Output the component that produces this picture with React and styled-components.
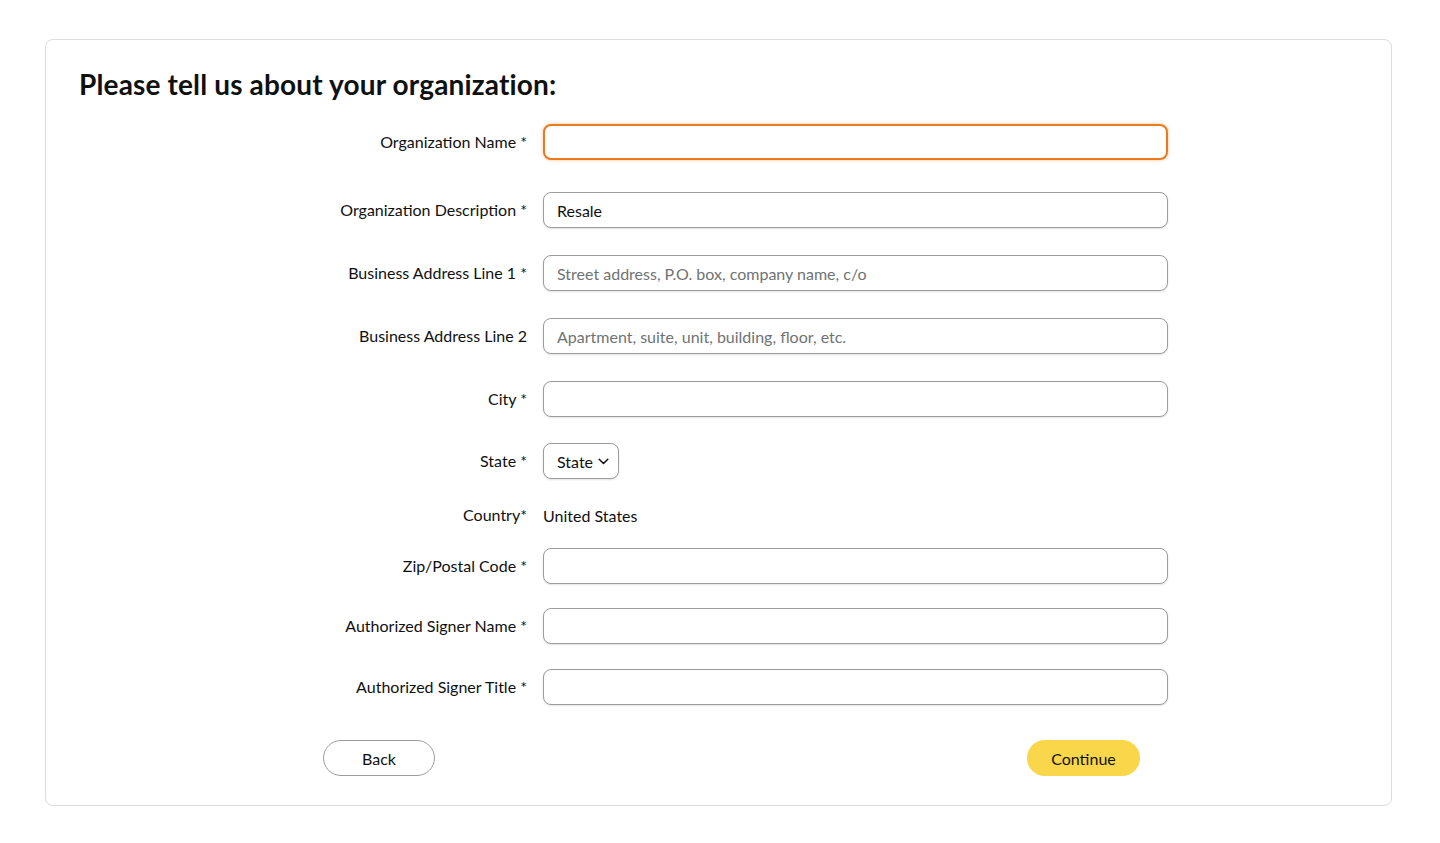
import React from "react";
import styled, { createGlobalStyle } from "styled-components";

const Global = createGlobalStyle`
  html, body { margin: 0; padding: 0; background: #ffffff; }
  body { font-family: Lato, "Open Sans", Arial, sans-serif; color: #0f1111; }
  * { box-sizing: border-box; }
`;

const Page = styled.div`
  padding: 39px 48px 38px 45px;
`;

const Card = styled.section`
  border: 1px solid #dddddd;
  border-radius: 8px;
  padding: 28px 33px 29px 33px;
  height: 767px;
`;

const Title = styled.h1`
  margin: 0;
  font-size: 28px;
  line-height: 32px;
  font-weight: 700;
  letter-spacing: 0.15px;
  color: #0f1111;
`;

const Form = styled.div`
  display: grid;
  grid-template-columns: 448px 625px;
  column-gap: 16px;
  margin-top: 24px;
`;

const Label = styled.label`
  grid-column: 1;
  margin-top: ${(p) => p.$mt || 0}px;
  height: ${(p) => p.$h || 36}px;
  padding-bottom: 2px;
  display: flex;
  align-items: center;
  justify-content: flex-end;
  font-size: 16px;
  color: #0f1111;
  white-space: nowrap;
`;

const Field = styled.div`
  grid-column: 2;
  margin-top: ${(p) => p.$mt || 0}px;
  height: ${(p) => p.$h || 36}px;
  display: flex;
  align-items: center;
`;

const Input = styled.input`
  width: 100%;
  height: 36px;
  border: ${(p) => (p.$focus ? "2px solid #ea7a1f" : "1px solid #9a9d9d")};
  border-radius: 8px;
  padding: 0 ${(p) => (p.$focus ? 12 : 13)}px;
  font-family: inherit;
  font-size: 16px;
  color: #0f1111;
  background: #fff;
  outline: none;
  box-shadow: ${(p) => (p.$focus ? "0 0 3px 1px rgba(228,121,17,.25)" : "0 1px 2px rgba(15,17,17,.12)")};
  &::placeholder { color: #6f7373; }
`;

const Select = styled.div`
  height: 36px;
  width: 76px;
  border: 1px solid #9a9d9d;
  border-radius: 8px;
  padding: 0 9px 0 13px;
  display: flex;
  align-items: center;
  justify-content: space-between;
  font-size: 16px;
  background: #fff;
  box-shadow: 0 1px 2px rgba(15,17,17,.12);
`;

const StaticText = styled.span`
  font-size: 16px;
  color: #0f1111;
`;

const ButtonBar = styled.div`
  margin: 35px 0 0 244px;
  width: 817px;
  display: flex;
  justify-content: space-between;
`;

const Button = styled.button`
  height: 36px;
  width: ${(p) => p.$w}px;
  border-radius: 18px;
  font-family: inherit;
  font-size: 16px;
  color: #0f1111;
  border: ${(p) => (p.$primary ? "none" : "1px solid #9a9d9d")};
  background: ${(p) => (p.$primary ? "#fad64a" : "#ffffff")};
  cursor: pointer;
`;

const rows = [
  { label: "Organization Name *", mt: 0, focus: true },
  { label: "Organization Description *", mt: 32, value: "Resale" },
  { label: "Business Address Line 1 *", mt: 27, ph: "Street address, P.O. box, company name, c/o" },
  { label: "Business Address Line 2", mt: 27, ph: "Apartment, suite, unit, building, floor, etc." },
  { label: "City *", mt: 27 },
  { label: "State *", mt: 26, type: "select" },
  { label: "Country*", mt: 22, type: "text", h: 28 },
  { label: "Zip/Postal Code *", mt: 19 },
  { label: "Authorized Signer Name *", mt: 24 },
  { label: "Authorized Signer Title *", mt: 25 },
];

export default function App() {
  return (
    <Page>
      <Global />
      <Card>
        <Title>Please tell us about your organization:</Title>
        <Form>
          {rows.map((r) => (
            <React.Fragment key={r.label}>
              <Label $mt={r.mt} $h={r.h}>{r.label}</Label>
              <Field $mt={r.mt} $h={r.h}>
                {r.type === "select" ? (
                  <Select>
                    <span>State</span>
                    <svg width="11" height="7" viewBox="0 0 11 7" fill="none">
                      <path d="M1.2 1.2 5.5 5.5l4.3-4.3" stroke="#0f1111" strokeWidth="1.5" strokeLinecap="round" strokeLinejoin="round" />
                    </svg>
                  </Select>
                ) : r.type === "text" ? (
                  <StaticText>United States</StaticText>
                ) : (
                  <Input
                    $focus={r.focus}
                    placeholder={r.ph}
                    defaultValue={r.value}
                  />
                )}
              </Field>
            </React.Fragment>
          ))}
        </Form>
        <ButtonBar>
          <Button $w={112}>Back</Button>
          <Button $w={113} $primary>Continue</Button>
        </ButtonBar>
      </Card>
    </Page>
  );
}
